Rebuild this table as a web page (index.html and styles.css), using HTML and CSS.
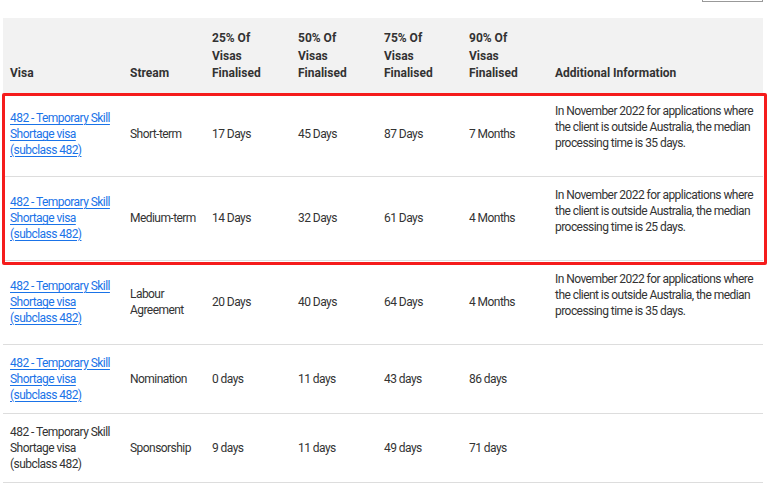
FILE: index.html
```html
<!DOCTYPE html>
<html>
<head>
<meta charset="utf-8">
<link rel="stylesheet" href="styles.css">
</head>
<body>
<div class="toolbar"><span class="tool-btn"></span></div>
<div class="table-wrap">
<table class="visa-table">
<colgroup>
<col class="c-visa"><col class="c-stream"><col class="c-num"><col class="c-num"><col class="c-num3"><col class="c-num"><col class="c-info">
</colgroup>
<thead>
<tr>
<th>Visa</th>
<th>Stream</th>
<th>25% Of Visas Finalised</th>
<th>50% Of Visas Finalised</th>
<th>75% Of Visas Finalised</th>
<th>90% Of Visas Finalised</th>
<th>Additional Information</th>
</tr>
</thead>
<tbody>
<tr>
<td><a href="#">482 - Temporary Skill Shortage visa (subclass 482)</a></td>
<td>Short-term</td>
<td>17 Days</td>
<td>45 Days</td>
<td>87 Days</td>
<td>7 Months</td>
<td class="info"><p>In November 2022 for applications where the client is outside Australia, the median processing time is 35 days.</p></td>
</tr>
<tr>
<td><a href="#">482 - Temporary Skill Shortage visa (subclass 482)</a></td>
<td>Medium-term</td>
<td>14 Days</td>
<td>32 Days</td>
<td>61 Days</td>
<td>4 Months</td>
<td class="info"><p>In November 2022 for applications where the client is outside Australia, the median processing time is 25 days.</p></td>
</tr>
<tr>
<td><a href="#">482 - Temporary Skill Shortage visa (subclass 482)</a></td>
<td>Labour Agreement</td>
<td>20 Days</td>
<td>40 Days</td>
<td>64 Days</td>
<td>4 Months</td>
<td class="info"><p>In November 2022 for applications where the client is outside Australia, the median processing time is 35 days.</p></td>
</tr>
<tr>
<td><a href="#">482 - Temporary Skill Shortage visa (subclass 482)</a></td>
<td>Nomination</td>
<td>0 days</td>
<td>11 days</td>
<td>43 days</td>
<td>86 days</td>
<td></td>
</tr>
<tr>
<td>482 - Temporary Skill Shortage visa (subclass 482)</td>
<td>Sponsorship</td>
<td>9 days</td>
<td>11 days</td>
<td>49 days</td>
<td>71 days</td>
<td></td>
</tr>
</tbody>
</table>
<div class="highlight"></div>
</div>
</body>
</html>
```

FILE: styles.css
```css
html, body {
  margin: 0;
  padding: 0;
  background: #fff;
}
body {
  font-family: Roboto, "Liberation Sans", Arial, sans-serif;
  font-size: 12px;
  color: #333;
}
.toolbar {
  height: 18px;
  display: flex;
  justify-content: flex-end;
  padding-right: 14px;
  overflow: hidden;
}
.tool-btn {
  display: block;
  width: 61px;
  height: 20px;
  margin-top: -18px;
  border: 1px solid #999;
  box-sizing: border-box;
}
.table-wrap {
  position: relative;
  margin-left: 3px;
  width: 760px;
}
.visa-table {
  width: 760px;
  border-collapse: collapse;
  table-layout: fixed;
}
.c-visa { width: 120px; }
.c-stream { width: 82px; }
.c-num { width: 86px; }
.c-num3 { width: 85px; }
.c-info { width: 215px; }
.visa-table th {
  background: #f2f2f2;
  font-weight: 700;
  text-align: left;
  vertical-align: bottom;
  line-height: 17.5px;
  padding: 12px 20px 10px 7px;
  color: #333;
}
.visa-table td {
  vertical-align: middle;
  line-height: 16px;
  padding: 10px 4px 10px 7px;
  border-bottom: 1px solid #ddd;
  letter-spacing: -0.55px;
}
.visa-table td.info p {
  margin: 0 0 15px;
}
.visa-table a {
  color: #1a73e8;
  text-decoration: underline;
  text-underline-offset: 2px;
}
.highlight {
  position: absolute;
  left: -1px;
  top: 75px;
  width: 765px;
  height: 172px;
  box-sizing: border-box;
  border: 3px solid #f51c1c;
  border-radius: 2px;
  pointer-events: none;
}
```
